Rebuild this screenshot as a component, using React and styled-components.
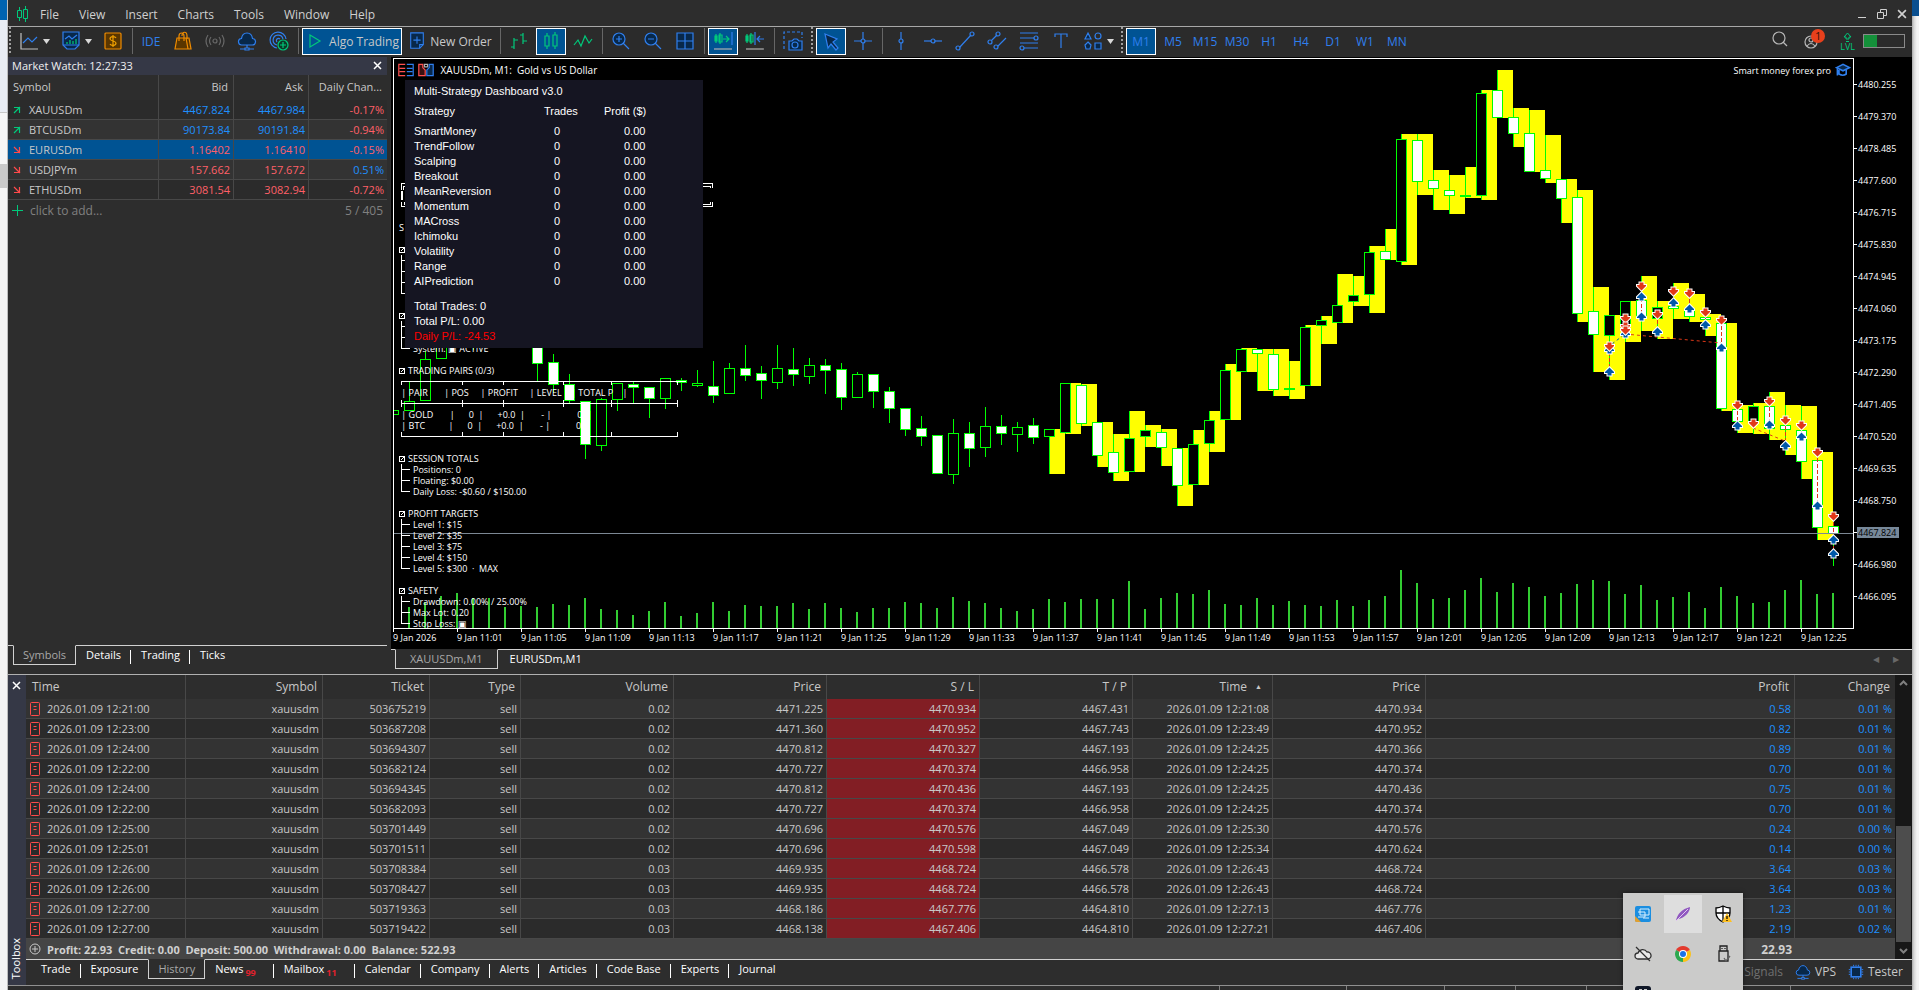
import React from 'react';
import styled, { createGlobalStyle } from 'styled-components';

const GlobalStyle = createGlobalStyle`
    * {
        box-sizing: border-box;
    }

    body {
        margin: 0;
        background: #f4f5f7;
        color: #c8c8c8;
        font-family: 'Open Sans', 'Noto Sans', sans-serif;
        font-size: 12px;
        overflow: hidden;
    }

    button {
        margin: 0;
        padding: 0;
        border: none;
        background: none;
        color: inherit;
        font: inherit;
    }

    table {
        border-spacing: 0;
        table-layout: fixed;
        width: 100%;
    }
`;

const BLUE = '#2f7fee';
const GREEN = '#00c97b';
const LIME = '#00ff00';

/* ---------- data ---------- */

const menuItems = ['File', 'View', 'Insert', 'Charts', 'Tools', 'Window', 'Help'];
const timeframes = ['M1', 'M5', 'M15', 'M30', 'H1', 'H4', 'D1', 'W1', 'MN'];

const quotes = [
    { symbol: 'XAUUSDm', bid: '4467.824', ask: '4467.984', change: '-0.17%', up: true },
    { symbol: 'BTCUSDm', bid: '90173.84', ask: '90191.84', change: '-0.94%', up: true },
    { symbol: 'EURUSDm', bid: '1.16402', ask: '1.16410', change: '-0.15%', selected: true },
    { symbol: 'USDJPYm', bid: '157.662', ask: '157.672', change: '0.51%' },
    { symbol: 'ETHUSDm', bid: '3081.54', ask: '3082.94', change: '-0.72%' },
];

const strategies = [
    'SmartMoney',
    'TrendFollow',
    'Scalping',
    'Breakout',
    'MeanReversion',
    'Momentum',
    'MACross',
    'Ichimoku',
    'Volatility',
    'Range',
    'AIPrediction',
];

const historyColumns = [
    { title: 'Time', width: 160 },
    { title: 'Symbol', width: 137 },
    { title: 'Ticket', width: 107 },
    { title: 'Type', width: 91 },
    { title: 'Volume', width: 153 },
    { title: 'Price', width: 153 },
    { title: 'S / L', width: 153 },
    { title: 'T / P', width: 153 },
    { title: 'Time', width: 140, sorted: true },
    { title: 'Price', width: 153 },
    { title: 'Profit' },
    { title: 'Change', width: 100 },
];

const deals = [
    ['12:21:00', '503675219', '0.02', '4471.225', '4470.934', '4467.431', '12:21:08', '4470.934', '0.58', '0.01 %'],
    ['12:23:00', '503687208', '0.02', '4471.360', '4470.952', '4467.743', '12:23:49', '4470.952', '0.82', '0.01 %'],
    ['12:24:00', '503694307', '0.02', '4470.812', '4470.327', '4467.193', '12:24:25', '4470.366', '0.89', '0.01 %'],
    ['12:22:00', '503682124', '0.02', '4470.727', '4470.374', '4466.958', '12:24:25', '4470.374', '0.70', '0.01 %'],
    ['12:24:00', '503694345', '0.02', '4470.812', '4470.436', '4467.193', '12:24:25', '4470.436', '0.75', '0.01 %'],
    ['12:22:00', '503682093', '0.02', '4470.727', '4470.374', '4466.958', '12:24:25', '4470.374', '0.70', '0.01 %'],
    ['12:25:00', '503701449', '0.02', '4470.696', '4470.576', '4467.049', '12:25:30', '4470.576', '0.24', '0.00 %'],
    ['12:25:01', '503701511', '0.02', '4470.696', '4470.598', '4467.049', '12:25:34', '4470.624', '0.14', '0.00 %'],
    ['12:26:00', '503708384', '0.03', '4469.935', '4468.724', '4466.578', '12:26:43', '4468.724', '3.64', '0.03 %'],
    ['12:26:00', '503708427', '0.03', '4469.935', '4468.724', '4466.578', '12:26:43', '4468.724', '3.64', '0.03 %'],
    ['12:27:00', '503719363', '0.03', '4468.186', '4467.776', '4464.810', '12:27:13', '4467.776', '1.23', '0.01 %'],
    ['12:27:00', '503719422', '0.03', '4468.138', '4467.406', '4464.810', '12:27:21', '4467.406', '2.19', '0.02 %'],
];

const toolboxTabs = [
    { label: 'Trade' },
    { label: 'Exposure', last: true },
    { label: 'History', active: true },
    { label: 'News', count: 99 },
    { label: 'Mailbox', count: 11 },
    { label: 'Calendar' },
    { label: 'Company' },
    { label: 'Alerts' },
    { label: 'Articles' },
    { label: 'Code Base' },
    { label: 'Experts' },
    { label: 'Journal', last: true },
];

const priceLabels = [
    '4480.255', '4479.370', '4478.485', '4477.600', '4476.715', '4475.830',
    '4474.945', '4474.060', '4473.175', '4472.290', '4471.405', '4470.520',
    '4469.635', '4468.750', '4467.824', '4466.980', '4466.095',
];

const timeLabels = [
    '2026', '11:01', '11:05', '11:09', '11:13', '11:17', '11:21', '11:25',
    '11:29', '11:33', '11:37', '11:41', '11:45', '11:49', '11:53', '11:57',
    '12:01', '12:05', '12:09', '12:13', '12:17', '12:21', '12:25',
];

// high, body top, body bottom, low, bearish
const candles = [
    [381, 401, 411, 411, 0], [351, 359, 401, 401, 0], [330, 338, 359, 359, 0],
    [300, 310, 338, 340, 0], [300, 310, 338, 350, 0], [300, 305, 320, 330, 0],
    [300, 305, 320, 330, 1], [310, 320, 335, 340, 1], [330, 335, 364, 382, 1],
    [354, 362, 385, 393, 1], [374, 384, 401, 404, 1], [401, 401, 445, 459, 1],
    [398, 399, 446, 451, 0], [383, 383, 400, 411, 0], [381, 384, 388, 403, 1],
    [387, 387, 399, 418, 1], [378, 378, 399, 409, 0], [378, 380, 383, 391, 1],
    [370, 383, 386, 387, 0], [361, 386, 396, 403, 1], [363, 368, 394, 394, 0],
    [345, 368, 376, 381, 1], [366, 373, 381, 399, 1], [345, 368, 383, 389, 0],
    [348, 369, 375, 386, 1], [358, 365, 377, 384, 0], [359, 365, 371, 394, 1],
    [363, 369, 398, 410, 1], [372, 374, 398, 398, 0], [374, 374, 392, 408, 1],
    [387, 391, 409, 423, 1], [408, 408, 430, 436, 1], [416, 428, 437, 446, 1],
    [435, 435, 474, 474, 1], [419, 433, 475, 484, 0], [422, 433, 449, 467, 1],
    [407, 426, 448, 457, 0], [415, 426, 434, 445, 1], [422, 427, 435, 452, 0],
    [418, 425, 438, 444, 1], [429, 429, 437, 474, 0], [383, 383, 433, 434, 0],
    [384, 385, 424, 426, 1], [422, 422, 456, 467, 1], [434, 452, 473, 481, 1],
    [411, 438, 472, 472, 0], [425, 430, 437, 447, 0], [429, 432, 448, 466, 1],
    [448, 448, 486, 506, 1], [430, 444, 485, 485, 0], [411, 420, 444, 452, 0],
    [364, 370, 420, 420, 0], [348, 349, 372, 372, 0], [349, 349, 354, 391, 1],
    [349, 354, 390, 396, 1], [361, 388, 390, 399, 0], [325, 327, 386, 386, 0],
    [316, 320, 326, 344, 0], [274, 305, 323, 323, 0], [276, 295, 302, 306, 0],
    [246, 252, 295, 313, 0], [229, 251, 260, 260, 1], [134, 139, 262, 265, 0],
    [134, 140, 182, 195, 1], [170, 180, 189, 210, 1], [175, 190, 196, 214, 1],
    [167, 195, 197, 198, 0], [90, 93, 196, 200, 0], [70, 90, 118, 118, 1],
    [108, 117, 134, 147, 1], [110, 133, 172, 172, 1], [135, 170, 179, 183, 1],
    [179, 179, 199, 223, 1], [190, 197, 314, 322, 1], [287, 311, 335, 372, 1],
    [315, 315, 336, 380, 0], [301, 301, 325, 342, 0], [276, 300, 318, 331, 1],
    [301, 307, 319, 339, 0], [283, 306, 309, 319, 1], [294, 308, 317, 322, 1],
    [314, 317, 320, 336, 1], [323, 323, 409, 411, 1], [405, 409, 422, 433, 1],
    [403, 406, 423, 434, 0], [392, 406, 429, 440, 1], [405, 425, 430, 455, 1],
    [406, 430, 462, 479, 1], [452, 460, 528, 540, 1], [516, 526, 534, 566, 1],
];

const volumes = [
    21, 26, 32, 35, 30, 30, 21, 22, 21, 24, 23, 30, 19, 18, 13, 17, 26, 12, 15,
    26, 17, 23, 22, 22, 25, 19, 25, 20, 16, 20, 20, 26, 25, 20, 31, 27, 25, 20,
    17, 19, 29, 26, 29, 29, 29, 47, 19, 30, 35, 34, 38, 24, 23, 30, 23, 27, 23,
    22, 28, 22, 28, 32, 58, 45, 29, 30, 38, 50, 36, 45, 41, 32, 35, 44, 48, 47,
    34, 43, 28, 31, 36, 20, 41, 32, 25, 26, 38, 48, 34, 35,
];

// candle index, sell levels, buy levels
const trades = [
    [75, [346], [350, 372]],
    [76, [318, 326, 330], [334]],
    [77, [286], [297, 317]],
    [78, [314], [332]],
    [79, [291], [303]],
    [80, [293], [309]],
    [81, [312], [325]],
    [82, [320], [348]],
    [83, [405], [426]],
    [84, [423], []],
    [85, [401], [425]],
    [86, [420], [446]],
    [87, [425], [437]],
    [88, [452], [506]],
    [89, [516], [540, 554]],
];

const barX = (i) => 409 + i * 16;

/* ---------- icons ---------- */

const icons = {
    line: (
        <>
            <path d="M2 2v16h17" stroke="#c0c0c0" />
            <path d="M4 12l5-5 4 4 5-5" stroke={BLUE} />
        </>
    ),
    indicators: (
        <>
            <path d="M2 1h16v13l-4 4H6l-4-4z" fill="#08284a" stroke={BLUE} />
            <path d="M4 8l4-3 3 3 5-4M2 14h16" stroke={BLUE} />
            <path d="M6 13v-2M9 13v-4M12 13v-3M15 13V8" stroke={GREEN} />
        </>
    ),
    dollar: (
        <>
            <rect x="2" y="2" width="16" height="16" rx="1" fill="#5a3600" stroke="#f08c00" />
            <path d="M13 7c-1-2-6-2-6 1 0 2 6 2 6 4 0 3-5 3-6 1M10 4v12" stroke="#f0a000" />
        </>
    ),
    bag: (
        <>
            <path d="M4 7h9l2 11H2zM13 7h3l2 11h-3" fill="#5a3600" stroke="#f08c00" />
            <path d="M6 10V5c0-4 5-4 5 0v5M9 5c0-5 5-5 5 0v3" stroke="#f08c00" />
        </>
    ),
    signal: (
        <>
            <circle cx="10" cy="10" r="2" stroke="#686868" />
            <path d="M6 6q-3 4 0 8M14 6q3 4 0 8M3 4q-4 6 0 12M17 4q4 6 0 12" stroke="#686868" />
        </>
    ),
    cloud: (
        <>
            <path d="M5 14a3 3 0 0 1-.5-6.500C5 4 7.500 2 10 2s5 2 5.500 5.500A3 3 0 0 1 15 14z" fill="#08284a" stroke={BLUE} />
            <path d="M10 14v3M3 18h5M12 18h5M8 17h4v2H8z" stroke={BLUE} />
        </>
    ),
    radar: (
        <>
            <path d="M8 17A8 8 0 1 1 17 8M8 14A5 5 0 1 1 14 8M8 11a2 2 0 1 1 3-3" stroke={BLUE} />
            <circle cx="14" cy="14" r="5" fill="#0b3a28" stroke={GREEN} />
            <path d="M11 14h6M14 11v6" stroke={GREEN} />
        </>
    ),
    play: <path d="M5 4l10 6-10 6z" stroke={GREEN} />,
    order: (
        <>
            <path d="M3 1h14v13l-4 4H3z" fill="#08284a" stroke={BLUE} />
            <path d="M6 9h8M10 5v8M13 18v-4h4" stroke={BLUE} />
        </>
    ),
    bars: <path d="M5 7v11M2 16h3M5 9h4M14 2v11M11 4h3M14 10h4" stroke={GREEN} />,
    candles: <path d="M6 2v3M6 15v3M4 5h4v10H4zM14 1v3M14 15v3M12 4h4v11h-4z" stroke={GREEN} />,
    wave: <path d="M1 14l4-5 3 6 4-10 4 7 3-4" stroke={GREEN} />,
    zoomIn: (
        <>
            <circle cx="8" cy="8" r="6" fill="#08284a" stroke={BLUE} />
            <path d="M12 12l6 6M5 8h6M8 5v6" stroke={BLUE} />
        </>
    ),
    zoomOut: (
        <>
            <circle cx="8" cy="8" r="6" fill="#08284a" stroke={BLUE} />
            <path d="M12 12l6 6M5 8h6" stroke={BLUE} />
        </>
    ),
    grid: <path d="M2 2h16v16H2zM10 2v16M2 10h16" fill="#08284a" stroke={BLUE} />,
    scroll: (
        <>
            <path d="M3 3v9M2 5h2v5H2zM7 2v11M6 4h3v7H6zM10 8h6M13 5l3 3-3 3" stroke={GREEN} />
            <path d="M19 1v13" stroke={BLUE} />
            <path d="M1 18h18" stroke="#b0b0b0" />
        </>
    ),
    shift: (
        <>
            <path d="M2 3v9M1 5h2v5H1zM6 2v11M5 4h3v7H5z" stroke={GREEN} />
            <path d="M10 1v13M19 8h-7M15 5l-3 3 3 3" stroke={BLUE} />
            <path d="M1 18h18" stroke="#b0b0b0" />
        </>
    ),
    camera: (
        <>
            <path d="M1 18V1h18v6" stroke={BLUE} strokeDasharray="3 2" />
            <path d="M6 10h3l2-2h3l2 2h3v9H6z" fill="#08284a" stroke={BLUE} />
            <circle cx="12" cy="14" r="3" stroke={BLUE} />
        </>
    ),
    cursor: <path d="M4 3l12 5-4 3 5 6-2 2-5-6-3 4z" fill="#08284a" stroke={BLUE} />,
    cross: (
        <>
            <path d="M10 1v18M1 10h18" stroke={BLUE} />
            <circle cx="10" cy="10" r="2" fill="#2c2c2c" stroke={BLUE} />
        </>
    ),
    vline: (
        <>
            <path d="M10 1v18" stroke={BLUE} />
            <circle cx="10" cy="10" r="2" fill="#2c2c2c" stroke={BLUE} />
        </>
    ),
    hline: (
        <>
            <path d="M1 10h18" stroke={BLUE} />
            <circle cx="10" cy="10" r="2" fill="#2c2c2c" stroke={BLUE} />
        </>
    ),
    trend: (
        <>
            <path d="M4 17L16 4" stroke={BLUE} />
            <circle cx="3" cy="17" r="2" fill="#2c2c2c" stroke={BLUE} />
            <circle cx="17" cy="3" r="2" fill="#2c2c2c" stroke={BLUE} />
        </>
    ),
    channel: (
        <>
            <path d="M3 11l8-8M9 17L19 7" stroke={BLUE} />
            <circle cx="3" cy="11" r="2" fill="#2c2c2c" stroke={BLUE} />
            <circle cx="11" cy="3" r="2" fill="#2c2c2c" stroke={BLUE} />
            <circle cx="9" cy="16" r="2" fill="#2c2c2c" stroke={BLUE} />
        </>
    ),
    fibo: (
        <>
            <path d="M1 2h18M1 7h18M1 12h18M1 17h18" stroke={BLUE} />
            <circle cx="17" cy="7" r="2" fill="#2c2c2c" stroke={BLUE} />
            <circle cx="3" cy="17" r="2" fill="#2c2c2c" stroke={BLUE} />
        </>
    ),
    text: <path d="M4 6V3h12v3M10 3v14" stroke={BLUE} />,
    shapes: (
        <>
            <path d="M5 2l3 6H2zM12 12h6v6h-6zM5 11l3 3-1 4H3l-1-4z" fill="#08284a" stroke={BLUE} />
            <circle cx="15" cy="5" r="3" stroke={BLUE} />
        </>
    ),
    search: (
        <>
            <circle cx="9" cy="9" r="6" stroke="#b8b8b8" />
            <path d="M13 13l4 4" stroke="#b8b8b8" />
        </>
    ),
    account: (
        <>
            <circle cx="9" cy="11" r="6" stroke="#b8b8b8" />
            <circle cx="9" cy="9" r="2" stroke="#b8b8b8" />
            <path d="M5 15q4-5 8 0" stroke="#b8b8b8" />
        </>
    ),
    tester: (
        <>
            <rect x="4" y="4" width="12" height="12" fill="#08284a" stroke={BLUE} strokeWidth="2" />
            <path d="M7 1v2M10 1v2M13 1v2M7 17v2M10 17v2M13 17v2M1 7h2M1 10h2M1 13h2M17 7h2M17 10h2M17 13h2" stroke={BLUE} />
        </>
    ),
    hat: (
        <>
            <path d="M2 7l8-4 8 4-8 4z" fill="#08284a" stroke={BLUE} strokeWidth="2" />
            <path d="M5 10v5q5 3 9 0v-5M3 8v9" stroke={BLUE} strokeWidth="2" />
        </>
    ),
    depth: (
        <>
            <path d="M9 3H1v14h8M2 8h7M2 12h7" stroke="#ff5050" strokeWidth="1.500" />
            <path d="M11 3h8v14h-8M11 8h7M11 12h7" stroke={BLUE} strokeWidth="1.500" />
        </>
    ),
    oneClick: (
        <>
            <path d="M6 3H1v14h8v-7L6 7z" fill="#3a1010" stroke="#ff5050" strokeWidth="1.500" />
            <path d="M14 3h5v14h-8v-7l3-3z" fill="#08284a" stroke={BLUE} strokeWidth="1.500" />
            <path d="M8 3h4v3H8z" stroke="#b0b0b0" strokeWidth="1.500" />
        </>
    ),
};

const Icon = ({ name, size = 20 }) => (
    <svg width={size} height={size} viewBox="0 0 20 20" fill="none" strokeWidth="1.2" aria-hidden="true">
        {icons[name]}
    </svg>
);

const CloseIcon = ({ color = '#fff', size = 9 }) => (
    <svg width={size} height={size} viewBox="0 0 9 9" aria-hidden="true">
        <path d="M1 1l7 7M8 1l-7 7" stroke={color} strokeWidth="1.5" />
    </svg>
);

/* ---------- frame ---------- */

const Desktop = styled.div`
    position: relative;
    display: grid;
    grid-template-columns: 8px minmax(0, 1fr) 7px;
    height: 100vh;
    overflow: hidden;
`;

const LeftEdge = styled.div`
    background: linear-gradient(
        #0063b1 20px, #e9edf4 20px, #e9edf4 112px, #c8c8c8 112px, #c8c8c8 113px,
        #f6f6f6 113px, #f6f6f6 164px, #c9c9c9 164px, #c9c9c9 188px, #f4f4f4 188px
    );
    border-right: 1px solid #bdbdbd;
`;

const RightEdge = styled.div`
    background: linear-gradient(
        90deg, #a8a8a8 0, #d8d8d8 2px, #f4f4f4 5px
    );
    border-top: 16px solid #0a4f8f;
`;

const Terminal = styled.div`
    display: flex;
    flex-direction: column;
    min-width: 0;
    background: #2d2d2d;
`;

const MenuBar = styled.nav`
    display: flex;
    align-items: center;
    height: 27px;
    padding: 2px 5px 0 8px;
    border-bottom: 1px solid #a8a8a8;
`;

const MenuLogo = styled.svg`
    margin-right: 1px;
`;

const MenuItem = styled.button`
    padding: 0 10px;
    color: #d0d0d0;
`;

const WindowButtons = styled.div`
    display: flex;
    gap: 10px;
    margin-left: auto;
`;

const ToolBar = styled.div`
    display: flex;
    align-items: center;
    gap: 2px;
    height: 30px;
    padding: 0 7px 2px 0;
    background: #2b2b2b;
`;

const Grip = styled.span`
    width: 4px;
    height: 28px;
    background: repeating-linear-gradient(#a0a0a0 0 2px, transparent 2px 4px) 1px 0 / 2px 28px no-repeat;
`;

const Divider = styled.span`
    width: 4px;
    height: 26px;
    background: linear-gradient(#666, #666) 2px 0 / 1px 26px no-repeat;
`;

const ToolButton = styled.button`
    display: flex;
    align-items: center;
    justify-content: center;
    gap: 4px;
    width: ${(props) => props.$width || 30}px;
    height: 27px;
    border: 1px solid ${(props) => (props.$active ? '#fff' : 'transparent')};
    background: ${(props) => (props.$active ? '#005393' : 'transparent')};
    color: ${(props) => (props.$plain ? '#c8c8c8' : BLUE)};
    white-space: nowrap;
`;

const ToolRight = styled.div`
    display: flex;
    align-items: center;
    gap: 12px;
    margin-left: auto;
`;

const AccountButton = styled.button`
    position: relative;
    display: flex;
`;

const Badge = styled.span`
    position: absolute;
    top: -2px;
    left: 9px;
    width: 14px;
    height: 14px;
    border-radius: 7px;
    background: #e8401c;
    color: #301008;
    font-size: 11px;
    line-height: 14px;
`;

const Level = styled.span`
    display: flex;
    flex-direction: column;
    align-items: center;
    margin-left: 6px;
    color: ${GREEN};
    font-size: 9px;
    line-height: 8px;
`;

const Battery = styled.span`
    width: 42px;
    height: 14px;
    margin-left: -4px;
    border: 1px solid #8a8a8a;
    background: linear-gradient(90deg, #14903a 13px, transparent 13px);
`;

const Workspace = styled.div`
    display: grid;
    grid-template-columns: 379px minmax(0, 1fr);
    gap: 4px;
    flex: 1;
    min-height: 0;
`;

/* ---------- market watch ---------- */

const MarketWatch = styled.section`
    display: flex;
    flex-direction: column;
    min-height: 0;
    padding-bottom: 9px;
`;

const PanelTitle = styled.header`
    display: flex;
    align-items: center;
    justify-content: space-between;
    height: 18px;
    padding: 0 5px 2px 4px;
    background: #353846;
    color: #f0f0f0;
    font-size: 11px;
`;

const QuoteHead = styled.th`
    height: 25px;
    padding: 0 5px 2px;
    border-right: 1px solid #484848;
    font-size: 11px;
    font-weight: 400;
    text-align: ${(props) => props.$align || 'right'};
    white-space: nowrap;

    &:last-child {
        border-right: none;
    }
`;

const QuoteRow = styled.tr`
    background: ${(props) => (props.$selected ? '#005393' : '#2b2b2b')};

    &:nth-child(even) {
        background: #333;
    }
`;

const QuoteCell = styled.td`
    height: 20px;
    padding: 0 3px;
    border-right: 1px solid #484848;
    border-bottom: 1px solid #484848;
    color: ${(props) => props.$color || '#c8c8c8'};
    font-size: 11px;
    text-align: right;

    &:first-child {
        padding-left: 5px;
        text-align: left;
    }

    &:last-child {
        border-right: none;
    }
`;

const WithIcon = styled.span`
    display: flex;
    align-items: center;
    gap: ${(props) => props.$gap || 8}px;
`;

const AddRow = styled.button`
    display: flex;
    align-items: center;
    gap: 7px;
    height: 20px;
    padding: 0 4px;
    color: #808080;
`;

const AddCount = styled.span`
    margin-left: auto;
`;

/* ---------- tabs ---------- */

const TabStrip = styled.div`
    display: flex;
    align-items: flex-start;
    border-top: 1px solid #d0d0d0;
`;

const MarketTabs = styled(TabStrip)`
    margin-top: auto;
    padding-left: 5px;
`;

const Tab = styled.button`
    position: relative;
    height: 20px;
    margin-top: -1px;
    padding: 0 ${(props) => props.$pad || 9}px;
    border: 1px solid ${(props) => (props.$active ? '#d0d0d0' : 'transparent')};
    border-top-color: ${(props) => (props.$active ? '#2d2d2d' : 'transparent')};
    background: ${(props) => (props.$active ? '#2d2d2d' : 'transparent')};
    color: ${(props) => (props.$active ? '#a8a8a8' : '#fff')};
    font-size: 11px;
    line-height: 18px;
    white-space: nowrap;

    &::after {
        content: '';
        position: absolute;
        right: -1px;
        top: 4px;
        width: 1px;
        height: 14px;
        background: ${(props) => (props.$divider ? '#fff' : 'transparent')};
    }
`;

const Count = styled.sub`
    margin: 0 8px 0 2px;
    color: #e0202c;
    font-size: 9px;
    font-weight: 700;
    line-height: 1;
`;

/* ---------- chart ---------- */

const ChartPanel = styled.section`
    display: flex;
    flex-direction: column;
    min-width: 0;
    min-height: 0;
`;

const ChartWindow = styled.div`
    display: grid;
    grid-template-columns: minmax(0, 1fr) 58px;
    grid-template-rows: minmax(0, 1fr) 20px;
    flex: 1;
    min-height: 0;
    padding: 1px 0 0 2px;
    background: #000;
    color: #fff;
    font-size: 9px;
`;

const Plot = styled.div`
    position: relative;
    overflow: hidden;
    border: 1px solid #fff;
`;

const PlotCanvas = styled.svg`
    display: block;
    width: 100%;
    height: 100%;
`;

const ChartCaption = styled.div`
    position: absolute;
    top: 3px;
    left: 4px;
    right: 2px;
    display: flex;
    align-items: center;
    gap: 4px;
    height: 16px;
    white-space: pre;
`;

const SymbolName = styled.span`
    font-size: 10px;
`;

const ExpertName = styled.span`
    display: flex;
    align-items: center;
    gap: 4px;
    margin-left: auto;
`;

const PriceAxis = styled.ol`
    margin: 0;
    padding: 10px 0 0;
    list-style: none;
    overflow: hidden;
`;

const PriceLabel = styled.li`
    display: flex;
    align-items: center;
    height: 32px;

    &::before {
        content: '';
        width: 3px;
        height: 1px;
        background: #fff;
    }

    span {
        padding: 0 3px 0 1px;
        background: ${(props) => (props.$current ? '#778899' : 'transparent')};
        color: ${(props) => (props.$current ? '#000' : '#fff')};
        line-height: 11px;
    }
`;

const TimeAxis = styled.ol`
    display: flex;
    margin: 0;
    padding: 0;
    list-style: none;
`;

const TimeLabel = styled.li`
    flex: none;
    width: 64px;
    white-space: nowrap;
    line-height: 12px;

    &::before {
        content: '';
        display: block;
        width: 1px;
        height: 3px;
        background: #fff;
    }
`;

const CommentBlock = styled.div`
    position: absolute;
    top: 119px;
    left: 5px;
    width: 400px;
`;

const CommentFrame = styled.svg`
    display: block;
`;

const CommentLine = styled.div`
    display: flex;
    align-items: center;
    height: 11px;
    line-height: 11px;
    white-space: pre;
`;

const Dashboard = styled.div`
    position: absolute;
    top: 21px;
    left: 11px;
    width: 298px;
    height: 268px;
    padding: 2px 9px 0;
    background: #151522;
    color: #fff;
    font-family: 'Liberation Sans', Arial, sans-serif;
    font-size: 11px;
    line-height: 15px;
`;

const DashboardTitle = styled.h2`
    margin: 2px 0 5px;
    font-size: 11px;
    font-weight: 400;
`;

const DashboardCell = styled.td`
    height: 15px;
    padding: 0 0 0 ${(props) => props.$indent || 0}px;
`;

const DashboardHead = styled.th`
    height: 15px;
    padding: 0 0 5px;
    font-weight: 400;
    text-align: left;
`;

const DashboardTotals = styled.div`
    margin-top: 10px;
`;

const Loss = styled.div`
    color: #f00;
`;

const ChartTabs = styled(TabStrip)`
    height: 25px;
    padding: 0 13px 0 4px;
`;

const TabArrows = styled.span`
    display: flex;
    gap: 14px;
    margin-left: auto;
    color: #686868;
    font-size: 8px;
    line-height: 18px;
`;

/* ---------- toolbox ---------- */

const Toolbox = styled.section`
    display: grid;
    grid-template-columns: 18px minmax(0, 1fr);
    border-top: 1px solid #b0b0b0;
    border-bottom: 1px solid #909090;
`;

const ToolboxSide = styled.div`
    display: flex;
    flex-direction: column;
    align-items: center;
    justify-content: space-between;
    padding: 3px 2px 6px 0;
    background: #353846;
    color: #fff;
    font-size: 11px;
`;

const SideLabel = styled.span`
    writing-mode: vertical-rl;
    transform: rotate(180deg);
    line-height: 14px;
`;

const HistoryArea = styled.div`
    display: grid;
    grid-template-columns: minmax(0, 1fr) 17px;
`;

const HistoryHead = styled.th`
    height: 24px;
    padding: 0 5px 2px;
    border-right: 1px solid #484848;
    font-weight: 400;
    text-align: right;

    &:first-child {
        padding-left: 6px;
        text-align: left;
    }

    &:last-child {
        border-right: none;
    }
`;

const SortMark = styled.span`
    margin: 0 5px 0 8px;
    font-size: 7px;
    vertical-align: 2px;
`;

const HistoryRow = styled.tr`
    background: #2b2b2b;

    &:nth-child(odd) {
        background: #333;
    }
`;

const HistoryCell = styled.td`
    height: 20px;
    padding: 0 3px;
    border-right: 1px solid #484848;
    border-bottom: 1px solid #484848;
    background: ${(props) => (props.$stop ? '#821e24' : 'transparent')};
    color: ${(props) => (props.$gain ? '#1e90ff' : '#c8c8c8')};
    font-size: 11px;
    text-align: right;
    white-space: nowrap;

    &:last-child {
        border-right: none;
    }
`;

const SummaryCell = styled.td`
    height: 20px;
    padding: 0 3px;
    background: #454545;
    color: #d0d0d0;
    font-size: ${(props) => (props.$total ? 12 : 11)}px;
    font-weight: 700;
    text-align: right;
    white-space: pre;
`;

const ScrollBar = styled.div`
    display: flex;
    flex-direction: column;
    align-items: center;
    justify-content: space-between;
    padding: 5px 0;
    background: linear-gradient(#4d4d4d, #4d4d4d) 1px 151px / 15px 116px no-repeat, #171717;
`;

const BottomLine = styled.div`
    display: flex;
    justify-content: space-between;
    height: 26px;
    border-top: 1px solid #d0d0d0;
`;

const BottomTabs = styled.div`
    display: flex;
    padding-left: 5px;
`;

const Services = styled.div`
    display: flex;
    align-items: center;
    gap: 12px;
    padding: 0 9px 2px 0;
`;

const Service = styled.button`
    display: flex;
    align-items: center;
    gap: 4px;
    color: ${(props) => (props.$dim ? '#707070' : '#c8c8c8')};
`;

const StatusBar = styled.footer`
    display: flex;
    justify-content: flex-end;
    height: 4px;
    padding-right: 121px;
`;

const StatusCell = styled.span`
    width: ${(props) => props.$width}px;
    border-left: 1px solid #808080;
`;

/* ---------- tray ---------- */

const Tray = styled.div`
    position: absolute;
    right: 176px;
    bottom: 0;
    display: grid;
    grid-template-columns: repeat(3, 40px);
    grid-auto-rows: 40px;
    height: 97px;
    padding-top: 1px;
    overflow: hidden;
    background: #cbcbca;
    box-shadow: 0 0 4px rgba(0, 0, 0, 0.5);
`;

const TrayItem = styled.button`
    display: flex;
    align-items: center;
    justify-content: center;
    margin: 1px;
    background: ${(props) => (props.$hover ? '#dedede' : 'transparent')};
`;

/* ---------- components ---------- */

const Tool = ({ icon, label, active, width }) => (
    <ToolButton type="button" aria-label={label} $active={active} $width={width}>
        <Icon name={icon} />
        {width && (
            <svg width="7" height="5" aria-hidden="true">
                <path d="M0 0h7L3.500 5z" fill="#d8d8d8" />
            </svg>
        )}
    </ToolButton>
);

const TopMenu = () => (
    <MenuBar>
        <MenuLogo width="13" height="16" viewBox="0 0 13 16" fill="none" stroke={GREEN}>
            <path d="M3.500 1v3M3.500 12v3M1.500 4.500h4v7h-4zM9.500 0v3M9.500 13v3M7.500 3.500h4v9h-4z" />
        </MenuLogo>
        {menuItems.map((item) => (
            <MenuItem key={item} type="button">
                {item}
            </MenuItem>
        ))}
        <WindowButtons>
            <button type="button" aria-label="Minimize">
                <svg width="10" height="10">
                    <path d="M1 8.500h8" stroke="#d0d0d0" />
                </svg>
            </button>
            <button type="button" aria-label="Restore">
                <svg width="10" height="10" fill="none" stroke="#d0d0d0">
                    <path d="M.5 3.500h6v6h-6zM3.500 3.500v-3h6v6h-3" />
                </svg>
            </button>
            <button type="button" aria-label="Close">
                <CloseIcon color="#d0d0d0" size={10} />
            </button>
        </WindowButtons>
    </MenuBar>
);

const MainTools = () => (
    <ToolBar>
        <Grip />
        <Tool icon="line" label="Chart type" width={40} />
        <Tool icon="indicators" label="Indicators" width={40} />
        <Tool icon="dollar" label="Symbols" />
        <Divider />
        <ToolButton type="button">IDE</ToolButton>
        <Tool icon="bag" label="Market" />
        <Tool icon="signal" label="Signals" />
        <Tool icon="cloud" label="VPS" />
        <Tool icon="radar" label="Community" />
        <Divider />
        <ToolButton type="button" $active $plain $width={100}>
            <Icon name="play" />
            Algo Trading
        </ToolButton>
        <ToolButton type="button" $plain $width={92}>
            <Icon name="order" size={18} />
            New Order
        </ToolButton>
        <Divider />
        <Tool icon="bars" label="Bars" />
        <Tool icon="candles" label="Candles" active />
        <Tool icon="wave" label="Line" />
        <Divider />
        <Tool icon="zoomIn" label="Zoom in" />
        <Tool icon="zoomOut" label="Zoom out" />
        <Tool icon="grid" label="Tile windows" />
        <Divider />
        <Tool icon="scroll" label="Auto scroll" active />
        <Tool icon="shift" label="Chart shift" />
        <Divider />
        <Tool icon="camera" label="Screenshot" />
        <Grip />
        <Tool icon="cursor" label="Cursor" active />
        <Tool icon="cross" label="Crosshair" />
        <Divider />
        <Tool icon="vline" label="Vertical line" />
        <Tool icon="hline" label="Horizontal line" />
        <Tool icon="trend" label="Trendline" />
        <Tool icon="channel" label="Channel" />
        <Tool icon="fibo" label="Fibonacci" />
        <Tool icon="text" label="Text" />
        <Tool icon="shapes" label="Objects" width={40} />
        <Grip />
        {timeframes.map((frame) => (
            <ToolButton key={frame} type="button" $active={frame === 'M1'}>
                {frame}
            </ToolButton>
        ))}
        <ToolRight>
            <button type="button" aria-label="Search">
                <Icon name="search" />
            </button>
            <AccountButton type="button">
                <Icon name="account" />
                <Badge>1</Badge>
            </AccountButton>
            <Level>
                <svg width="9" height="11" fill="none" stroke={GREEN}>
                    <path d="M4.500 1L1 5h2v2h3V5h2zM3 9.500h3" />
                </svg>
                LVL
            </Level>
            <Battery />
        </ToolRight>
    </ToolBar>
);

const Direction = ({ up }) => (
    <svg width="8" height="8" fill="none" stroke={up ? GREEN : '#ff4a4a'} strokeWidth="1.2" aria-hidden="true">
        {up ? <path d="M1 7l6-6M1 1.500h5.500V7" /> : <path d="M1 1l6 6M6.500 1v5.500H1" />}
    </svg>
);

const Market = () => (
    <MarketWatch>
        <PanelTitle>
            Market Watch: 12:27:33
            <button type="button" aria-label="Close Market Watch">
                <CloseIcon />
            </button>
        </PanelTitle>
        <table>
            <colgroup>
                <col width="151" />
                <col width="75" />
                <col width="75" />
                <col />
            </colgroup>
            <thead>
                <tr>
                    <QuoteHead $align="left">Symbol</QuoteHead>
                    <QuoteHead>Bid</QuoteHead>
                    <QuoteHead>Ask</QuoteHead>
                    <QuoteHead>Daily Chan...</QuoteHead>
                </tr>
            </thead>
            <tbody>
                {quotes.map((quote) => {
                    const color = quote.up ? '#1e90ff' : '#ff6068';
                    return (
                        <QuoteRow key={quote.symbol} $selected={quote.selected}>
                            <QuoteCell>
                                <WithIcon>
                                    <Direction up={quote.up} />
                                    {quote.symbol}
                                </WithIcon>
                            </QuoteCell>
                            <QuoteCell $color={color}>{quote.bid}</QuoteCell>
                            <QuoteCell $color={color}>{quote.ask}</QuoteCell>
                            <QuoteCell $color={quote.change.startsWith('-') ? '#ff6068' : '#1e90ff'}>
                                {quote.change}
                            </QuoteCell>
                        </QuoteRow>
                    );
                })}
            </tbody>
        </table>
        <AddRow type="button">
            <svg width="11" height="11" stroke={GREEN} aria-hidden="true">
                <path d="M5.500 0v11M0 5.500h11" />
            </svg>
            click to add...
            <AddCount>5 / 405</AddCount>
        </AddRow>
        <MarketTabs>
            <Tab type="button" $active>Symbols</Tab>
            <Tab type="button" $divider>Details</Tab>
            <Tab type="button" $divider>Trading</Tab>
            <Tab type="button">Ticks</Tab>
        </MarketTabs>
    </MarketWatch>
);

const Marker = ({ x, y, sell }) => (
    <path
        transform={`translate(${x} ${y})${sell ? '' : ' scale(1 -1)'}`}
        d="M-1.500-3.500h4V-1H5v1L.5 4.500-4 0v-1h2.500z"
        fill={sell ? '#e03818' : '#0058a8'}
        stroke="#fff"
        strokeWidth="2"
        paintOrder="stroke"
    />
);

const PriceChart = () => (
    <PlotCanvas shapeRendering="crispEdges">
        <g transform="translate(-394 -59)">
            {candles.map(([high, , , low], i) =>
                i >= 40 && i < 89 ? (
                    <rect key={i} x={barX(i)} y={high} width="16" height={low - high} fill="#ffff00" />
                ) : null
            )}
            {volumes.map((volume, i) => (
                <rect key={i} x={barX(i) - 1} y={628 - volume} width="2" height={volume} fill="#32cd32" />
            ))}
            <rect x="388.5" y="410.5" width="10" height="4" fill="none" stroke={LIME} />
            {candles.map(([high, top, bottom, low, bearish], i) => (
                <g key={i}>
                    <rect x={barX(i)} y={high} width="1" height={low - high} fill={LIME} />
                    <rect
                        x={barX(i) - 4.5}
                        y={top + 0.5}
                        width="10"
                        height={Math.max(bottom - top - 1, 1)}
                        fill={bearish ? '#fff' : '#000'}
                        stroke={LIME}
                    />
                </g>
            ))}
            <rect x="394" y="533" width="3000" height="1" fill="#7c8894" />
            <path
                d="M1625 334L1721 343M1753 428l32 13"
                stroke="#e03818"
                strokeDasharray="3 3"
                shapeRendering="auto"
            />
            <path d="M1612 344l13-10" stroke="#0058a8" strokeDasharray="3 3" shapeRendering="auto" />
            <g shapeRendering="auto">
                {trades.map(([i, sells, buys]) => (
                    <g key={i}>
                        {buys.length > 0 && (
                            <path
                                d={`M${barX(i) + 0.5} ${sells[0]}V${buys[buys.length - 1]}`}
                                stroke="#e03818"
                                strokeDasharray="4 2"
                            />
                        )}
                        {buys.map((y) => (
                            <Marker key={y} x={barX(i)} y={y} />
                        ))}
                        {sells.map((y) => (
                            <Marker key={y} x={barX(i)} y={y} sell />
                        ))}
                    </g>
                ))}
            </g>
        </g>
    </PlotCanvas>
);

const Branch = ({ end }) => (
    <svg width="14" height="11" fill="none" stroke="#fff" shapeRendering="crispEdges" aria-hidden="true">
        <path d={end ? 'M2.500 0v5.500H11' : 'M2.500 0v11M2.500 5.500H11'} />
    </svg>
);

const Glyph = () => (
    <svg width="9" height="11" fill="none" stroke="#fff" shapeRendering="crispEdges" aria-hidden="true">
        <path d="M.5 3.500h5v5h-5zM2 7l3-3" />
    </svg>
);

const Rule = ({ from, to }) => (
    <svg width="280" height="11" fill="none" stroke="#fff" shapeRendering="crispEdges" aria-hidden="true">
        <path d="M2.500 5.500h276" />
        <path d={[2.5, 63.5, 104.5, 164.5, 212.5, 278.5].map((x) => `M${x} ${from}V${to}`).join('')} />
    </svg>
);

const Section = ({ title, lines }) => (
    <>
        <CommentLine>
            <Glyph />
            {title}
        </CommentLine>
        {lines.map((line, i) => (
            <CommentLine key={i}>
                <Branch end={i === lines.length - 1} />
                {line}
            </CommentLine>
        ))}
        <CommentLine />
    </>
);

const Comments = () => (
    <CommentBlock>
        <CommentFrame width="316" height="33" fill="none" stroke="#fff" shapeRendering="crispEdges">
            <path d="M2.500 12V5.500h311V10M4.500 12V8.500h307V10M2.500 13v9M3.500 13v9M2.500 24v4.500h311V24M5.500 24v2.500h306V24" />
        </CommentFrame>
        <CommentLine />
        <CommentLine>S</CommentLine>
        <CommentLine />
        <Section title="" lines={['', '', '', '']} />
        <Section title="" lines={['', '', 'System: ▣ ACTIVE']} />
        <CommentLine>
            <Glyph />
            TRADING PAIRS (0/3)
        </CommentLine>
        <CommentLine><Rule from={5} to={9} /></CommentLine>
        <CommentLine>{' | PAIR       | POS     | PROFIT     | LEVEL    | TOTAL P    |'}</CommentLine>
        <CommentLine><Rule from={2} to={9} /></CommentLine>
        <CommentLine>{' | GOLD       |      0  |      +0.0  |       - |           0  |'}</CommentLine>
        <CommentLine>{' | BTC          |      0  |      +0.0  |       - |           0  |'}</CommentLine>
        <CommentLine><Rule from={1} to={6} /></CommentLine>
        <CommentLine />
        <Section title="SESSION TOTALS" lines={['Positions: 0', 'Floating: $0.00', 'Daily Loss: -$0.60 / $150.00']} />
        <Section
            title="PROFIT TARGETS"
            lines={['Level 1: $15', 'Level 2: $35', 'Level 3: $75', 'Level 4: $150', 'Level 5: $300  ·  MAX']}
        />
        <Section title="SAFETY" lines={['Drawdown: 0.00% / 25.00%', 'Max Lot: 0.20', 'Stop Loss: ▣']} />
    </CommentBlock>
);

const StrategyDashboard = () => (
    <Dashboard>
        <DashboardTitle>Multi-Strategy Dashboard v3.0</DashboardTitle>
        <table>
            <colgroup>
                <col width="130" />
                <col width="60" />
                <col />
            </colgroup>
            <thead>
                <tr>
                    <DashboardHead>Strategy</DashboardHead>
                    <DashboardHead>Trades</DashboardHead>
                    <DashboardHead>Profit ($)</DashboardHead>
                </tr>
            </thead>
            <tbody>
                {strategies.map((name) => (
                    <tr key={name}>
                        <DashboardCell>{name}</DashboardCell>
                        <DashboardCell $indent={10}>0</DashboardCell>
                        <DashboardCell $indent={20}>0.00</DashboardCell>
                    </tr>
                ))}
            </tbody>
        </table>
        <DashboardTotals>
            <div>Total Trades: 0</div>
            <div>Total P/L: 0.00</div>
            <Loss>Daily P/L: -24.53</Loss>
        </DashboardTotals>
    </Dashboard>
);

const Chart = () => (
    <ChartPanel>
        <ChartWindow>
            <Plot>
                <PriceChart />
                <Comments />
                <ChartCaption>
                    <Icon name="depth" size={16} />
                    <Icon name="oneClick" size={16} />
                    <SymbolName>{' XAUUSDm, M1:  Gold vs US Dollar'}</SymbolName>
                    <ExpertName>
                        Smart money forex pro
                        <Icon name="hat" size={16} />
                    </ExpertName>
                </ChartCaption>
                <StrategyDashboard />
            </Plot>
            <PriceAxis>
                {priceLabels.map((price) => (
                    <PriceLabel key={price} $current={price === '4467.824'}>
                        <span>{price}</span>
                    </PriceLabel>
                ))}
            </PriceAxis>
            <TimeAxis>
                {timeLabels.map((time) => (
                    <TimeLabel key={time}>9 Jan {time}</TimeLabel>
                ))}
            </TimeAxis>
        </ChartWindow>
        <ChartTabs>
            <Tab type="button" $active $pad={14}>XAUUSDm,M1</Tab>
            <Tab type="button" $pad={11}>EURUSDm,M1</Tab>
            <TabArrows>
                <span>◀</span>
                <span>▶</span>
            </TabArrows>
        </ChartTabs>
    </ChartPanel>
);

const DealIcon = () => (
    <svg width="12" height="16" fill="none" stroke="#ff4a4a" aria-hidden="true">
        <rect x="1.500" y="1.500" width="9" height="13" rx="1" />
        <path d="M4.500 5.500h3M4.500 8.500h3" />
    </svg>
);

const Chevron = ({ down }) => (
    <svg width="9" height="6" fill="none" stroke="#808080" strokeWidth="2" aria-hidden="true">
        <path d={down ? 'M1 1l3.500 3.500L8 1' : 'M1 5l3.500-3.500L8 5'} />
    </svg>
);

const History = () => (
    <Toolbox>
        <ToolboxSide>
            <button type="button" aria-label="Close Toolbox">
                <CloseIcon />
            </button>
            <SideLabel>Toolbox</SideLabel>
        </ToolboxSide>
        <div>
            <HistoryArea>
                <table>
                    <colgroup>
                        {historyColumns.map((column, i) => (
                            <col key={i} width={column.width} />
                        ))}
                    </colgroup>
                    <thead>
                        <tr>
                            {historyColumns.map((column, i) => (
                                <HistoryHead key={i}>
                                    {column.title}
                                    {column.sorted && <SortMark>▲</SortMark>}
                                </HistoryHead>
                            ))}
                        </tr>
                    </thead>
                    <tbody>
                        {deals.map(([opened, ticket, volume, price, sl, tp, closed, exit, profit, change]) => (
                            <HistoryRow key={ticket}>
                                <HistoryCell>
                                    <WithIcon $gap={6}>
                                        <DealIcon />
                                        2026.01.09 {opened}
                                    </WithIcon>
                                </HistoryCell>
                                <HistoryCell>xauusdm</HistoryCell>
                                <HistoryCell>{ticket}</HistoryCell>
                                <HistoryCell>sell</HistoryCell>
                                <HistoryCell>{volume}</HistoryCell>
                                <HistoryCell>{price}</HistoryCell>
                                <HistoryCell $stop>{sl}</HistoryCell>
                                <HistoryCell>{tp}</HistoryCell>
                                <HistoryCell>2026.01.09 {closed}</HistoryCell>
                                <HistoryCell>{exit}</HistoryCell>
                                <HistoryCell $gain>{profit}</HistoryCell>
                                <HistoryCell $gain>{change}</HistoryCell>
                            </HistoryRow>
                        ))}
                    </tbody>
                    <tfoot>
                        <tr>
                            <SummaryCell colSpan={10}>
                                <WithIcon $gap={6}>
                                    <svg width="12" height="12" fill="none" stroke="#c8c8c8" aria-hidden="true">
                                        <circle cx="6" cy="6" r="5" />
                                        <path d="M3 6h6M6 3v6" />
                                    </svg>
                                    {'Profit: 22.93  Credit: 0.00  Deposit: 500.00  Withdrawal: 0.00  Balance: 522.93'}
                                </WithIcon>
                            </SummaryCell>
                            <SummaryCell $total>22.93</SummaryCell>
                            <SummaryCell />
                        </tr>
                    </tfoot>
                </table>
                <ScrollBar>
                    <Chevron />
                    <Chevron down />
                </ScrollBar>
            </HistoryArea>
            <BottomLine>
                <BottomTabs>
                    {toolboxTabs.map((tab) => (
                        <Tab key={tab.label} type="button" $active={tab.active} $divider={!tab.active && !tab.last}>
                            {tab.label}
                            {tab.count && <Count>{tab.count}</Count>}
                        </Tab>
                    ))}
                </BottomTabs>
                <Services>
                    <Service type="button" $dim>
                        <Icon name="signal" size={16} />
                        Signals
                    </Service>
                    <Service type="button">
                        <Icon name="cloud" size={16} />
                        VPS
                    </Service>
                    <Service type="button">
                        <Icon name="tester" size={16} />
                        Tester
                    </Service>
                </Services>
            </BottomLine>
        </div>
    </Toolbox>
);

const TrayMenu = () => (
    <Tray>
        <TrayItem type="button" aria-label="Display driver">
            <svg width="16" height="16">
                <rect width="16" height="16" rx="2" fill="#1b8ee0" />
                <path d="M5 3h9v6H5zM3 6h7v5H3M8 12h6" fill="none" stroke="#d8f0ff" />
                <path d="M0 10l6 6H1l-1-1z" fill="#e0a030" />
            </svg>
        </TrayItem>
        <TrayItem type="button" aria-label="Feather" $hover>
            <svg width="16" height="16">
                <path d="M1 15C2 8 7 3 15 1c0 5-5 11-12 12z" fill="#9058c0" />
                <path d="M1 15L13 3" stroke="#e0c8f0" />
            </svg>
        </TrayItem>
        <TrayItem type="button" aria-label="Security">
            <svg width="18" height="18">
                <path d="M9 1c2 1 4 2 7 2v5c0 4-3 7-7 9-4-2-7-5-7-9V3c3 0 5-1 7-2z" fill="#fff" stroke="#000" strokeWidth="1.3" />
                <path d="M9 1v16M2 8h14" stroke="#000" strokeWidth="1.3" />
                <path d="M13 8l5 9H8z" fill="#ffc020" />
                <path d="M13 11v3M13 15v1" stroke="#000" strokeWidth="1.2" />
            </svg>
        </TrayItem>
        <TrayItem type="button" aria-label="Cloud sync off">
            <svg width="18" height="16" fill="#e8e8e8" stroke="#303030" strokeWidth="1.3">
                <path d="M4 13a3 3 0 0 1 0-6 5 5 0 0 1 9-1 3.500 3.500 0 0 1 1 7z" />
                <path d="M2 1l14 14" />
            </svg>
        </TrayItem>
        <TrayItem type="button" aria-label="Browser">
            <svg width="16" height="16">
                <path d="M8 8L1.100 4A8 8 0 0 1 14.900 4z" fill="#e33b2e" />
                <path d="M8 8l6.900-4A8 8 0 0 1 8 16z" fill="#fbc116" />
                <path d="M8 8v8A8 8 0 0 1 1.100 4z" fill="#2da94f" />
                <circle cx="8" cy="8" r="4" fill="#fff" />
                <circle cx="8" cy="8" r="3" fill="#1a73e8" />
            </svg>
        </TrayItem>
        <TrayItem type="button" aria-label="Eject USB">
            <svg width="16" height="18" fill="none" stroke="#202020" strokeWidth="1.3">
                <path d="M5 6V1h7v5M4 6h9v10H4zM7 3v1M10 3v1" />
                <path d="M9 13l2 3 4-5" stroke="#606060" />
            </svg>
        </TrayItem>
        <TrayItem type="button" aria-label="Controller">
            <svg width="16" height="16">
                <rect width="16" height="16" rx="3" fill="#101828" />
                <path d="M4 4h3M9 4h3" stroke="#cbcbca" strokeWidth="2" />
            </svg>
        </TrayItem>
    </Tray>
);

const App = () => (
    <>
        <GlobalStyle />
        <Desktop>
            <LeftEdge />
            <Terminal>
                <TopMenu />
                <MainTools />
                <Workspace>
                    <Market />
                    <Chart />
                </Workspace>
                <History />
                <StatusBar>
                    {[127, 98, 71, 71, 204].map((width, i) => (
                        <StatusCell key={i} $width={width} />
                    ))}
                    <StatusCell $width={1} />
                </StatusBar>
            </Terminal>
            <RightEdge />
            <TrayMenu />
        </Desktop>
    </>
);

export default App;
